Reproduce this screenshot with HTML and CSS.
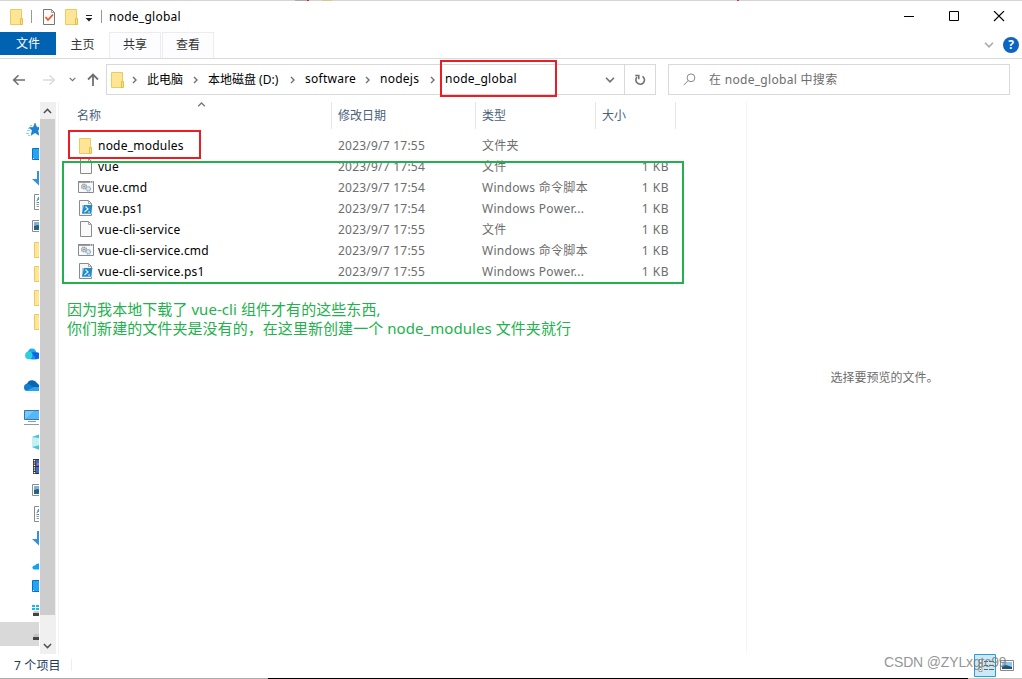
FILE: index.html
```
<!DOCTYPE html>
<html lang="zh-CN">
<head>
    <meta charset="UTF-8">
    <meta name="viewport" content="width=device-width, initial-scale=1.0">
    <title>node_global</title>
    <link rel="stylesheet" href="styles.css">
</head>
<body>

    <svg class="defs" width="0" height="0">
        <symbol id="folder" viewBox="0 0 16 16">
            <path d="M1.5.5h11v15h-11z" fill="#ffe595" stroke="#eccb5e"/>
            <path d="M11.5 9.5h2v6h-2z" fill="#ffe08a" stroke="#e6bd45"/>
        </symbol>
        <symbol id="file" viewBox="0 0 16 16">
            <path d="M2.5.5h8l3 3v12h-11z" fill="#fafafa" stroke="#8b8b8b"/>
            <path d="M10.5.5v3h3" fill="none" stroke="#a5a5a5"/>
        </symbol>
        <symbol id="cmd" viewBox="0 0 16 16">
            <path d="M.5 2.5h15v11H.5z" fill="#f8f9fa" stroke="#858b91"/>
            <path d="M0 3h16" stroke="#858b91" stroke-width="1.6"/>
            <path d="M12 3h1M14 3h1" stroke="#fff"/>
            <circle cx="6" cy="7.5" r="2.4" fill="#ddd" stroke="#96999d" stroke-width="1.3" stroke-dasharray="1.2 .5"/>
            <circle cx="10.3" cy="9.8" r="2.2" fill="#d5e8f5" stroke="#8eabc2" stroke-width="1.3" stroke-dasharray="1.2 .5"/>
            <circle cx="6" cy="7.5" r=".8" fill="#777"/>
        </symbol>
        <symbol id="ps1" viewBox="0 0 16 16">
            <path d="M1.5.5h9l3 3v12h-12z" fill="#f7f7f7" stroke="#8b8b8b"/>
            <path d="M10.5.5v3h3" fill="none" stroke="#a5a5a5"/>
            <path d="M4 5h10v9H4z" fill="#9fd3ee"/>
            <path d="M6 5h8.5L13 13.5H4z" fill="#2489c5"/>
            <path d="M7.5 6.5L10 9l-3.5 3M10 12h2" fill="none" stroke="#d9f2ff" stroke-width="1.2"/>
        </symbol>
        <symbol id="star" viewBox="0 0 16 16">
            <path d="M9 1l1.7 4.2 4.6.3-3.5 3 1.2 4.8-4-2.6-4 2.6 1.2-4.8-3-3 4.2-.3z" fill="#1b83d4" stroke="#1376c4" stroke-width=".5"/>
            <path d="M4 3.5h2M2 6.5h2M1 8.5h3M0 11.5h3M2 13.5h2" stroke="#8fcbf3"/>
        </symbol>
        <symbol id="desktop" viewBox="0 0 16 16">
            <path d="M.5 2.5h15v11H.5z" fill="#22a5f7" stroke="#0873c0"/>
            <path d="M1 12.5h1" stroke="#fff"/>
        </symbol>
        <symbol id="download" viewBox="0 0 16 16">
            <path d="M5 1h5v8h5l-7.5 7L0 9h5z" fill="#3290df"/>
        </symbol>
        <symbol id="document" viewBox="0 0 16 16">
            <path d="M2.5.5h11v15h-11z" fill="#fff" stroke="#8d8d8d"/>
            <path d="M6 3L5 6h3V3" fill="#3a9cdb"/>
            <path d="M4.5 8.5H12" stroke="#2b8fd0"/>
            <path d="M4.5 6.5H6M4.5 10.5H12M4.5 12.5H12" stroke="#999"/>
        </symbol>
        <symbol id="picture" viewBox="0 0 16 16">
            <path d="M.5 2.5h15v11H.5z" fill="#fff" stroke="#8d8d8d"/>
            <path d="M2 4h12v8H2z" fill="#75b5e6"/>
            <path d="M2 8l4-1 8 3v2H2z" fill="#315d65"/>
            <path d="M2 10h12v2H2z" fill="#1b65a2"/>
        </symbol>
        <symbol id="cloud" viewBox="0 0 16 16">
            <circle cx="8" cy="6.8" r="4.3" fill="#20aaf5"/>
            <rect x="5" y="6.2" width="11" height="7" rx="3.5" fill="#0a64e3"/>
            <circle cx="4.9" cy="9.4" r="3.8" fill="#2fd0de"/>
            <path d="M5 13.2a4 4 0 0 0 4-4 3 3 0 0 1 2 4z" fill="#1693f5"/>
        </symbol>
        <symbol id="onedrive" viewBox="0 0 16 16">
            <path d="M3 12a3.5 3.5 0 0 1 0-6 5.500 5.500 0 0 1 10-1l3 3v5H3z" fill="#0864b5"/>
            <path d="M0 9.500a3.500 3.500 0 0 1 5-3.500l10 7H3.500A3.500 3.500 0 0 1 0 9.500z" fill="#107dd0"/>
            <path d="M2 13l8-4h6v4z" fill="#29a5ed"/>
        </symbol>
        <symbol id="pc" viewBox="0 0 16 16">
            <path d="M.5.5h15v9H.5z" fill="#55b6fa" stroke="#39779e"/>
            <path d="M1 9V1h9z" fill="#75c9ff"/>
            <path d="M4 11.5h8M0 14.5h16" stroke="#8b9bb0"/>
        </symbol>
        <symbol id="cube" viewBox="0 0 16 16">
            <path d="M0 3l8-3 8 3v10l-8 3-8-3z" fill="#c3f0f2"/>
            <path d="M0 3l8-3v4zM0 13l8-2v5z" fill="#45c6ce"/>
        </symbol>
        <symbol id="video" viewBox="0 0 16 16">
            <path d="M1 1h14v15H1z" fill="#333"/>
            <path d="M2.5 2v14" stroke="#fff" stroke-width="1.4" stroke-dasharray="1.2 1.2"/>
            <path d="M4 2h10v6H4zM4 9h10v6H4z" fill="#3668d8"/>
            <path d="M5 5h4v2H5z" fill="#e06270"/>
        </symbol>
        <symbol id="smallcloud" viewBox="0 0 16 16">
            <path d="M2 15.500a2 2 0 0 1 1-4 4 4 0 0 1 7 0v4z" fill="#12a0f8"/>
        </symbol>
        <symbol id="windrive" viewBox="0 0 16 16">
            <path d="M0 3h3v2H0zM4 3h3v2H4zM0 6h3v2H0zM4 6h3v2H4z" fill="#18b7ee"/>
            <path d="M2 9h14v2H1z" fill="#ccc"/>
            <path d="M1 11h15v3H1z" fill="#444"/>
        </symbol>
        <symbol id="drive" viewBox="0 0 16 16">
            <path d="M2.5 8H16v3H1z" fill="#c3c3c3"/>
            <path d="M1 11h15v3H1z" fill="#444"/>
        </symbol>
        <symbol id="crumb" viewBox="0 0 6 8">
            <path d="M1 1l3 3-3 3" fill="none" stroke="#707070" stroke-width="1.4"/>
        </symbol>
        <symbol id="down" viewBox="0 0 10 6">
            <path d="M1 .8l4 4 4-4" fill="none" stroke="currentColor" stroke-width="1.6"/>
        </symbol>
    </svg>

    <div class="window">
        <header class="titlebar">
            <svg class="ico"><use href="#folder"/></svg>
            <span class="sep"></span>
            <svg class="ico check" viewBox="0 0 16 16">
                <path d="M2.5.5h8l3 3v12h-11z" fill="#fafafa" stroke="#777"/>
                <path d="M10.5.5v3h3" fill="none" stroke="#999"/>
                <path d="M4.5 8L7 11l5-5.5" fill="none" stroke="#e55b22" stroke-width="1.8"/>
            </svg>
            <svg class="ico"><use href="#folder"/></svg>
            <svg class="more" viewBox="0 0 8 7"><path d="M1 .5h6" stroke="#222"/><path d="M.5 3h7L4 6.500z" fill="#222"/></svg>
            <span class="sep"></span>
            <span class="title">node_global</span>
            <div class="controls">
                <svg viewBox="0 0 12 12"><path d="M1 5.5h10" stroke="#000"/></svg>
                <svg viewBox="0 0 12 12"><path d="M1.5.5h9v9h-9z" fill="none" stroke="#000"/></svg>
                <svg viewBox="0 0 12 12"><path d="M1 0l10 10M11 0L1 10" stroke="#000" stroke-width="1.1"/></svg>
            </div>
        </header>

        <nav class="tabs">
            <span class="tab active">文件</span>
            <span class="tab home">主页</span>
            <span class="tab boxed">共享</span>
            <span class="tab boxed">查看</span>
            <svg class="expand"><use href="#down"/></svg>
            <span class="help">?</span>
        </nav>

        <div class="toolbar">
            <div class="history">
                <svg width="14" height="12" viewBox="0 0 14 12"><path d="M13 6H2M6.5 1.2L1.7 6l4.800 4.800" fill="none" stroke="#707070" stroke-width="1.6"/></svg>
                <svg width="14" height="12" viewBox="0 0 14 12"><path d="M1 6h11M7.5 1.2L12.3 6l-4.800 4.800" fill="none" stroke="#dcdcdc" stroke-width="1.6"/></svg>
                <svg class="recent"><use href="#down"/></svg>
                <svg width="12" height="14" viewBox="0 0 12 14"><path d="M6 13V2M1 6.5l5-5 5 5" fill="none" stroke="#707070" stroke-width="1.8"/></svg>
            </div>
            <div class="address">
                <svg class="ico"><use href="#folder"/></svg>
                <svg class="crumb"><use href="#crumb"/></svg>
                <span class="c1">此电脑</span>
                <svg class="crumb"><use href="#crumb"/></svg>
                <span class="c2">本地磁盘 (D:)</span>
                <svg class="crumb"><use href="#crumb"/></svg>
                <span class="c3">software</span>
                <svg class="crumb"><use href="#crumb"/></svg>
                <span class="c4">nodejs</span>
                <svg class="crumb"><use href="#crumb"/></svg>
                <span class="c5">node_global</span>
                <svg class="drop"><use href="#down"/></svg>
                <div class="refresh">
                    <svg width="12" height="12" viewBox="0 0 12 12"><path d="M8.5 2.3A4.300 4.300 0 1 1 3 3" fill="none" stroke="#707070" stroke-width="1.6"/><path d="M1.2 1.5h3.600v3.700" fill="none" stroke="#707070" stroke-width="1.5"/></svg>
                </div>
            </div>
            <div class="search">
                <svg width="13" height="13" viewBox="0 0 13 13"><circle cx="8" cy="4.8" r="3.9" fill="none" stroke="#888"/><path d="M5.2 7.6L.7 12.2" stroke="#888"/></svg>
                <span>在 node_global 中搜索</span>
            </div>
        </div>

        <main class="content">
            <aside class="tree">
                <div class="node star"><svg class="ico"><use href="#star"/></svg></div>
                <div class="node"><svg class="ico"><use href="#desktop"/></svg></div>
                <div class="node"><svg class="ico"><use href="#download"/></svg></div>
                <div class="node"><svg class="ico"><use href="#document"/></svg></div>
                <div class="node"><svg class="ico"><use href="#picture"/></svg></div>
                <div class="node dir"><svg class="ico"><use href="#folder"/></svg></div>
                <div class="node dir"><svg class="ico"><use href="#folder"/></svg></div>
                <div class="node dir"><svg class="ico"><use href="#folder"/></svg></div>
                <div class="node dir"><svg class="ico"><use href="#folder"/></svg></div>
                <div class="node root"><svg class="ico"><use href="#cloud"/></svg></div>
                <div class="node root"><svg class="ico"><use href="#onedrive"/></svg></div>
                <div class="node root"><svg class="ico"><use href="#pc"/></svg></div>
                <div class="node"><svg class="ico"><use href="#cube"/></svg></div>
                <div class="node"><svg class="ico"><use href="#video"/></svg></div>
                <div class="node"><svg class="ico"><use href="#picture"/></svg></div>
                <div class="node"><svg class="ico"><use href="#document"/></svg></div>
                <div class="node"><svg class="ico"><use href="#download"/></svg></div>
                <div class="node"><svg class="ico"><use href="#smallcloud"/></svg></div>
                <div class="node"><svg class="ico"><use href="#desktop"/></svg></div>
                <div class="node"><svg class="ico"><use href="#windrive"/></svg></div>
                <div class="node selected"><svg class="ico"><use href="#drive"/></svg></div>
            </aside>
            <div class="scrollbar">
                <svg class="up"><use href="#down"/></svg>
                <div class="thumb"></div>
                <svg><use href="#down"/></svg>
            </div>

            <section class="list">
                <div class="row head">
                    <span class="name">名称<svg class="sort"><use href="#down"/></svg></span>
                    <span class="date">修改日期</span>
                    <span class="type">类型</span>
                    <span class="size">大小</span>
                </div>
                <div class="row">
                    <span class="name"><svg class="ico dir"><use href="#folder"/></svg><b>node_modules</b></span>
                    <span class="date">2023/9/7 17:55</span>
                    <span class="type">文件夹</span>
                    <span class="size"></span>
                </div>
                <div class="row">
                    <span class="name"><svg class="ico"><use href="#file"/></svg><b>vue</b></span>
                    <span class="date">2023/9/7 17:54</span>
                    <span class="type">文件</span>
                    <span class="size">1 KB</span>
                </div>
                <div class="row">
                    <span class="name"><svg class="ico"><use href="#cmd"/></svg><b>vue.cmd</b></span>
                    <span class="date">2023/9/7 17:54</span>
                    <span class="type">Windows 命令脚本</span>
                    <span class="size">1 KB</span>
                </div>
                <div class="row">
                    <span class="name"><svg class="ico"><use href="#ps1"/></svg><b>vue.ps1</b></span>
                    <span class="date">2023/9/7 17:54</span>
                    <span class="type">Windows Power...</span>
                    <span class="size">1 KB</span>
                </div>
                <div class="row">
                    <span class="name"><svg class="ico"><use href="#file"/></svg><b>vue-cli-service</b></span>
                    <span class="date">2023/9/7 17:55</span>
                    <span class="type">文件</span>
                    <span class="size">1 KB</span>
                </div>
                <div class="row">
                    <span class="name"><svg class="ico"><use href="#cmd"/></svg><b>vue-cli-service.cmd</b></span>
                    <span class="date">2023/9/7 17:55</span>
                    <span class="type">Windows 命令脚本</span>
                    <span class="size">1 KB</span>
                </div>
                <div class="row">
                    <span class="name"><svg class="ico"><use href="#ps1"/></svg><b>vue-cli-service.ps1</b></span>
                    <span class="date">2023/9/7 17:55</span>
                    <span class="type">Windows Power...</span>
                    <span class="size">1 KB</span>
                </div>
                <p class="note">因为我本地下载了 vue-cli 组件才有的这些东西,<br>你们新建的文件夹是没有的，在这里新创建一个 node_modules 文件夹就行</p>
            </section>

            <section class="preview">选择要预览的文件。</section>
        </main>

        <footer class="status">
            <span class="count">7 个项目</span>
            <div class="views">
                <svg width="22" height="23" viewBox="0 0 22 23">
                    <path d="M.5.5h21v22H.5z" fill="#cbe8f6" stroke="#26a0da"/>
                    <path d="M5 5.500h3v3H5zM5 9.500h3v3H5zM5 13.500h3v4H5z" fill="#fff" stroke="#888" stroke-width=".8"/>
                    <path d="M10 7.500h4m1 0h5M10 11.500h4m1 0h5M10 15.500h4m1 0h5" stroke="#666"/>
                    <path d="M6 15.500h1" stroke="#d33"/>
                </svg>
                <svg width="14" height="12" viewBox="0 0 14 12">
                    <path d="M.5.5h13v10H.5z" fill="#fff" stroke="#888"/>
                    <path d="M2 2h10v7H2z" fill="#8ac8f1"/>
                    <path d="M2 6l4-1 6 2v2H2z" fill="#25556b"/>
                </svg>
            </div>
        </footer>
    </div>

    <div class="mark mark-path"></div>
    <div class="mark mark-folder"></div>
    <div class="mark mark-files"></div>
    <div class="watermark">CSDN @ZYLxgtc99</div>

</body>
</html>
```
FILE: styles.css
```
* {
    box-sizing: border-box;
}
body {
    margin: 0;
    font-family: "Noto Sans", "Noto Sans CJK SC", sans-serif;
    font-size: 12px;
    color: #1a1a1a;
    background: #fff;
    overflow: hidden;
}
svg {
    display: block;
    flex: none;
}
.defs {
    position: absolute;
}
.ico {
    width: 16px;
    height: 16px;
}
.window {
    display: flex;
    flex-direction: column;
    width: 1022px;
    height: 679px;
    border-top: 1px solid;
    border-image: linear-gradient(90deg, #d5d5d5 295px, #aaa 295px, #aaa 307px, #d22 307px, #d22 309px, #d5d5d5 309px, #d5d5d5 322px, #d9c68a 322px, #d9c68a 332px, #d5d5d5 332px, #d5d5d5 737px, #d33 737px, #d33 739px, #d5d5d5 739px) 1;
}

/* title bar */
.titlebar {
    display: flex;
    align-items: center;
    height: 31px;
    padding-left: 9px;
}
.sep {
    width: 1px;
    height: 13px;
    margin-left: 6px;
    background: #999;
}
.titlebar .check {
    margin: 0 7px 0 9px;
}
.more {
    width: 8px;
    height: 7px;
    margin: 3px 0 0 5px;
}
.more + .sep {
    margin-left: 8px;
}
.title {
    margin-left: 7px;
    color: #000;
    letter-spacing: .25px;
}
.controls {
    display: flex;
    gap: 33px;
    margin-left: auto;
    padding-right: 17px;
}
.controls svg {
    width: 12px;
    height: 12px;
}

/* ribbon */
.tabs {
    display: flex;
    height: 27px;
    border-bottom: 1px solid #dadbdc;
}
.tab {
    height: 26px;
    line-height: 25px;
    text-align: center;
    color: #333;
}
.tab.active {
    width: 56px;
    height: 23px;
    line-height: 24px;
    color: #fff;
    background: #0063b1;
}
.tab.home {
    width: 53px;
}
.tab.boxed {
    width: 52px;
    line-height: 23px;
    margin-right: 1px;
    border: 1px solid #ebecec;
    border-bottom: 0;
    background: #fdfdff;
}
.expand {
    width: 10px;
    height: 6px;
    margin: 10px 9px 0 auto;
    color: #aaa;
}
.help {
    width: 16px;
    height: 16px;
    margin: 5px 3px 0 0;
    border-radius: 50%;
    line-height: 16px;
    text-align: center;
    font-weight: bold;
    color: #fff;
    background: #0a66c2;
}

/* address row */
.toolbar {
    display: flex;
    height: 43px;
    padding-top: 5px;
}
.history {
    display: flex;
    align-items: center;
    width: 106px;
    height: 31px;
    padding-left: 12px;
}
.history svg + svg {
    margin-left: 16px;
}
.history .recent {
    width: 7px;
    height: 5px;
    margin-left: 13px;
    color: #707070;
}
.history .recent + svg {
    margin-left: 11px;
}
.address {
    display: flex;
    align-items: center;
    width: 550px;
    height: 31px;
    padding-left: 3px;
    border: 1px solid #d9d9d9;
    color: #000;
}
.crumb {
    width: 6px;
    height: 8px;
}
.address .ico + .crumb {
    margin-left: 6px;
}
.address span {
    margin-left: 9px;
    padding-bottom: 2px;
    white-space: nowrap;
}
.c1 { width: 46px; }
.c2 { width: 82px; }
.c3 { width: 60px; }
.c4 { width: 50px; }
.c3, .c4, .c5 {
    letter-spacing: .25px;
}
.drop {
    width: 10px;
    height: 6px;
    margin: 0 9px 0 auto;
    color: #707070;
}
.refresh {
    display: flex;
    align-items: center;
    justify-content: center;
    width: 31px;
    height: 29px;
    border-left: 1px solid #d9d9d9;
}
.search {
    display: flex;
    align-items: center;
    gap: 13px;
    width: 342px;
    height: 31px;
    margin-left: 12px;
    padding-left: 14px;
    border: 1px solid #d9d9d9;
    color: #6d6d6d;
}
.search span {
    padding-bottom: 1px;
    letter-spacing: .3px;
}

/* main area */
.content {
    display: flex;
    height: 552px;
}
.tree {
    width: 39px;
    margin-right: 1px;
    padding-top: 16px;
    overflow: hidden;
}
.node {
    display: flex;
    align-items: center;
    height: 24px;
    padding-left: 32px;
}
.node.star {
    padding-left: 26px;
}
.node.dir {
    padding-left: 33px;
}
.node.root {
    padding-left: 24px;
    margin-top: 8px;
}
.node.selected {
    background: #d9d9d9;
}
.scrollbar {
    display: flex;
    flex-direction: column;
    align-items: flex-start;
    width: 16px;
    background: #f0f0f0;
    color: #505050;
}
.scrollbar svg {
    width: 9px;
    height: 6px;
    margin: 28px 0 0 3px;
}
.scrollbar .up {
    margin: 6px 0 5px 3px;
    transform: rotate(180deg);
}
.thumb {
    width: 15px;
    height: 496px;
    background: #cdcdcd;
}
.list {
    width: 688px;
    margin-left: 2px;
    border-left: 1px solid #f3f3f3;
}
.row {
    display: grid;
    grid-template-columns: 273px 144px 120px 80px;
    align-items: center;
    height: 21px;
    line-height: 17px;
    color: #6d6d6d;
    letter-spacing: .22px;
}
.row span {
    padding-left: 6px;
    white-space: nowrap;
}
.row .name {
    display: flex;
    align-items: center;
    padding-left: 19px;
}
.row .ico {
    margin-bottom: 1px;
}
.row .ico.dir {
    margin-bottom: 0;
}
.row b {
    margin-left: 4px;
    font-weight: normal;
    color: #000;
}
.row .type {
    letter-spacing: .3px;
}
.row .size {
    padding-right: 7px;
    text-align: right;
    letter-spacing: .5px;
}
.row.head {
    height: 27px;
    margin-bottom: 6px;
    color: #4c607a;
}
.row.head span {
    height: 27px;
    line-height: 27px;
    border-right: 1px solid #e5e5e5;
    text-align: left;
    letter-spacing: 0;
}
.row.head .name {
    position: relative;
    padding-left: 18px;
}
.sort {
    position: absolute;
    top: 0;
    left: 138px;
    width: 9px;
    height: 5px;
    color: #777;
    transform: rotate(180deg);
}
.note {
    margin: 18px 0 0 8px;
    font-size: 15px;
    line-height: 19px;
    color: #22b14c;
    letter-spacing: .06px;
    white-space: nowrap;
}
.preview {
    display: flex;
    align-items: center;
    justify-content: center;
    flex: 1;
    padding-bottom: 2px;
    border-left: 1px solid #f5f5f5;
    color: #6d6d6d;
}

/* status bar */
.status {
    display: flex;
    justify-content: space-between;
    height: 25px;
    border-bottom: 1px solid;
    border-image: linear-gradient(90deg, #aaa 268px, #000 268px, #000 967px, #c5c5bd 967px) 1;
}
.count {
    width: 72px;
    height: 12px;
    margin-top: 5px;
    padding-left: 14px;
    border-right: 1px solid #eee;
    line-height: 14px;
    color: #1e395b;
    letter-spacing: .15px;
}
.views {
    display: flex;
    align-items: center;
    gap: 4px;
    height: 23px;
    padding-right: 8px;
}

/* highlight frames */
.mark {
    position: absolute;
    border: 2px solid #ed1c24;
}
.mark-path {
    left: 440px;
    top: 60px;
    width: 117px;
    height: 37px;
}
.mark-folder {
    left: 68px;
    top: 130px;
    width: 133px;
    height: 29px;
}
.mark-files {
    left: 62px;
    top: 161px;
    width: 622px;
    height: 123px;
    border-color: #22b14c;
}
.watermark {
    position: absolute;
    left: 884px;
    top: 653px;
    font-family: "Liberation Sans", sans-serif;
    font-size: 14px;
    line-height: 18px;
    letter-spacing: -.15px;
    color: rgba(120, 120, 120, .8);
}
```
